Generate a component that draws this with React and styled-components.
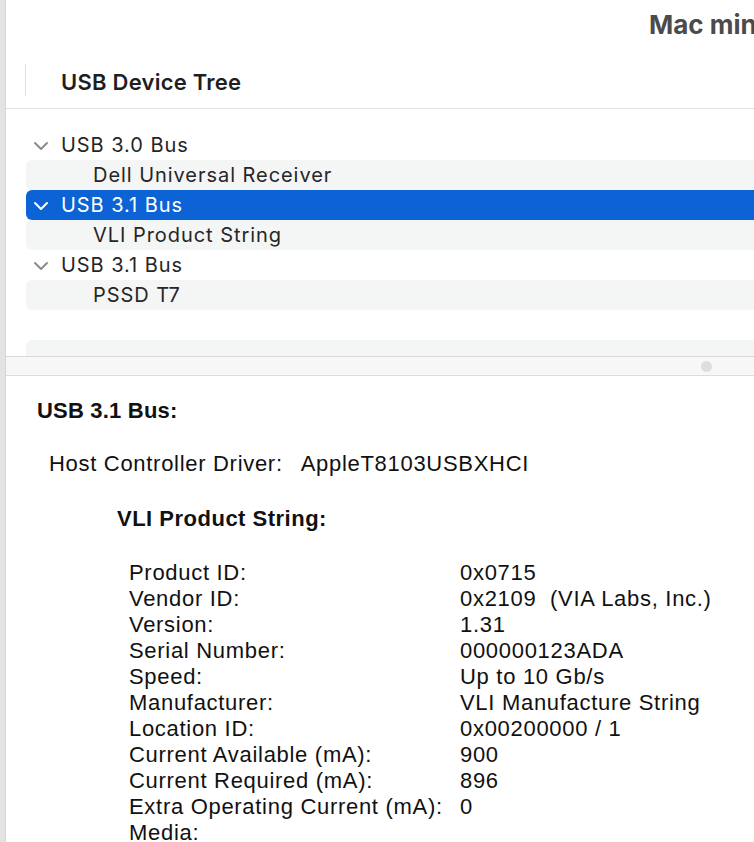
import React from "react";
import styled, { createGlobalStyle } from "styled-components";

const GlobalStyle = createGlobalStyle`
  html, body {
    margin: 0;
    padding: 0;
    background: #ffffff;
    overflow: hidden;
  }
  * {
    box-sizing: border-box;
  }
`;

const treeRows = [
  { label: "USB 3.0 Bus", level: 0, open: true },
  { label: "Dell Universal Receiver", level: 1 },
  { label: "USB 3.1 Bus", level: 0, open: true, selected: true },
  { label: "VLI Product String", level: 1 },
  { label: "USB 3.1 Bus", level: 0, open: true },
  { label: "PSSD T7", level: 1 },
  { label: "", level: 1, blank: true },
  { label: "", level: 1 },
];

const details = [
  ["Product ID:", "0x0715"],
  ["Vendor ID:", "0x2109  (VIA Labs, Inc.)"],
  ["Version:", "1.31"],
  ["Serial Number:", "000000123ADA"],
  ["Speed:", "Up to 10 Gb/s"],
  ["Manufacturer:", "VLI Manufacture String"],
  ["Location ID:", "0x00200000 / 1"],
  ["Current Available (mA):", "900"],
  ["Current Required (mA):", "896"],
  ["Extra Operating Current (mA):", "0"],
  ["Media:", ""],
];

const Chevron = ({ color }) => (
  <svg width="16" height="10" viewBox="0 0 16 10">
    <path
      d="M2 2 L8 8 L14 2"
      fill="none"
      stroke={color}
      strokeWidth="2"
      strokeLinecap="round"
      strokeLinejoin="round"
    />
  </svg>
);

const App = () => {
  return (
    <Window>
      <GlobalStyle />
      <SideStrip />
      <Main>
        <TitleBar>Mac mini</TitleBar>
        <ColumnHeader>
          <HeaderDivider />
          <HeaderTitle>USB Device Tree</HeaderTitle>
        </ColumnHeader>
        <Tree>
          {treeRows.map((row, i) => (
            <TreeRow
              key={i}
              $striped={i % 2 === 1 && !row.blank}
              $selected={row.selected}
            >
              {row.level === 0 ? (
                <Disclosure>
                  <Chevron color={row.selected ? "#ffffff" : "#8b8b8b"} />
                </Disclosure>
              ) : (
                <Indent />
              )}
              <RowLabel $selected={row.selected}>{row.label}</RowLabel>
            </TreeRow>
          ))}
        </Tree>
        <Scroller>
          <Thumb />
        </Scroller>
        <Details>
          <DetailTitle>USB 3.1 Bus:</DetailTitle>
          <HostLine>
            <span>Host Controller Driver:</span>
            <span>AppleT8103USBXHCI</span>
          </HostLine>
          <DeviceTitle>VLI Product String:</DeviceTitle>
          <PropTable>
            {details.map(([k, v]) => (
              <React.Fragment key={k}>
                <PropKey>{k}</PropKey>
                <PropValue>{v}</PropValue>
              </React.Fragment>
            ))}
          </PropTable>
        </Details>
      </Main>
    </Window>
  );
};

export default App;

const Window = styled.div`
  display: flex;
  width: 754px;
  height: 842px;
  overflow: hidden;
  background: #ffffff;
`;

const SideStrip = styled.div`
  flex: 0 0 6px;
  background: #e3e3e4;
  border-right: 1px solid #d6d6d6;
`;

const Main = styled.div`
  flex: 1;
  min-width: 0;
  display: flex;
  flex-direction: column;
  overflow: hidden;

  & > * {
    flex-shrink: 0;
  }
`;

const TitleBar = styled.div`
  height: 52px;
  padding-left: 643px;
  padding-top: 8px;
  font-family: Inter, "Liberation Sans", sans-serif;
  font-weight: 700;
  font-size: 26px;
  line-height: 34px;
  color: #4b4b4b;
  white-space: nowrap;
  overflow: hidden;
`;

const ColumnHeader = styled.div`
  height: 57px;
  display: flex;
  align-items: center;
  border-bottom: 1px solid #e2e2e2;
  padding-left: 19px;
`;

const HeaderDivider = styled.div`
  width: 1px;
  height: 32px;
  background: #dedede;
  margin-right: 35px;
`;

const HeaderTitle = styled.div`
  font-family: Inter, "Liberation Sans", sans-serif;
  font-weight: 600;
  font-size: 22px;
  letter-spacing: 0.25px;
  color: #1f1f1f;
  padding-top: 3px;
`;

const Tree = styled.div`
  height: 248px;
  padding-top: 21px;
  overflow: hidden;
  border-bottom: 1px solid #d9d9d9;
`;

const TreeRow = styled.div`
  height: 30px;
  margin-left: 20px;
  margin-right: -12px;
  display: flex;
  align-items: center;
  border-radius: 6px;
  background: ${(p) =>
    p.$selected ? "#0b63d6" : p.$striped ? "#f4f5f5" : "transparent"};
`;

const Disclosure = styled.div`
  width: 35px;
  display: flex;
  justify-content: flex-end;
  padding-right: 12px;
  padding-top: 1px;
`;

const Indent = styled.div`
  width: 67px;
`;

const RowLabel = styled.span`
  font-family: Inter, "Liberation Sans", sans-serif;
  font-size: 20px;
  letter-spacing: 0.95px;
  color: ${(p) => (p.$selected ? "#ffffff" : "#262626")};
  white-space: nowrap;
`;

const Scroller = styled.div`
  height: 19px;
  background: #f7f7f7;
  border-bottom: 1px solid #dcdcdc;
  display: flex;
  align-items: center;
  justify-content: flex-end;
  padding-right: 42px;
`;

const Thumb = styled.div`
  width: 11px;
  height: 11px;
  border-radius: 50%;
  background: #dedede;
`;

const Details = styled.div`
  padding: 22px 0 0 31px;
  font-family: "Liberation Sans", Arial, sans-serif;
  color: #111111;
  font-size: 22px;
  letter-spacing: 0.7px;
`;

const DetailTitle = styled.div`
  font-weight: 700;
  line-height: 26px;
  letter-spacing: 0.2px;
`;

const HostLine = styled.div`
  margin-top: 27px;
  margin-left: 12px;
  display: flex;
  gap: 18px;
  line-height: 26px;
`;

const DeviceTitle = styled.div`
  margin-top: 29px;
  margin-left: 80px;
  font-weight: 700;
  line-height: 26px;
  letter-spacing: 0.5px;
`;

const PropTable = styled.div`
  margin-top: 28px;
  margin-left: 92px;
  display: grid;
  grid-template-columns: 331px auto;
  line-height: 26px;
`;

const PropKey = styled.span`
  white-space: nowrap;
`;

const PropValue = styled.span`
  white-space: pre;
`;
